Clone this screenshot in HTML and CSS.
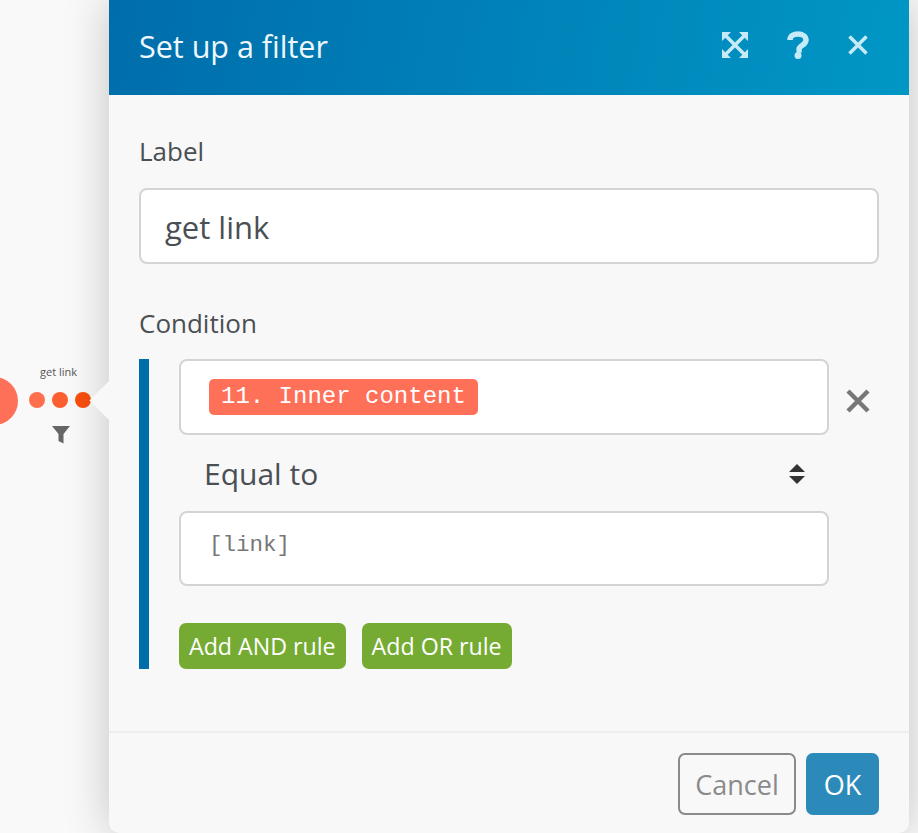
FILE: index.html
```html
<!DOCTYPE html>
<html lang="en">
<head>
    <meta charset="UTF-8">
    <title>Set up a filter</title>
    <link rel="stylesheet" href="styles.css">
</head>
<body>
    <div class="canvas">
        <div class="node"></div>
        <div class="route-label">get link</div>
        <div class="route">
            <span class="dot dot1"></span>
            <span class="dot dot2"></span>
            <span class="dot dot3"></span>
        </div>
        <svg class="route-filter" width="20" height="20" viewBox="0 0 20 20">
            <path d="M1 1h18l-6.500 8v9.500l-5-2.500v-7z" fill="#666"/>
        </svg>
    </div>
    <div class="modal">
        <div class="notch"></div>
        <div class="modal-head">
            <h1>Set up a filter</h1>
            <div class="head-icons">
                <svg width="26" height="26" viewBox="0 0 26 26" fill="none">
                    <path d="M0 9V0h9zM26 9V0h-9zM0 17v9h9zM26 17v9h-9z" fill="#c6ebf7"/>
                    <path d="M4 4l18 18M22 4L4 22" stroke="#c6ebf7" stroke-width="3.500"/>
                </svg>
                <svg width="22" height="28" viewBox="0 0 22 28" fill="none">
                    <path d="M3 9C3 5 6.500 3 11 3s8 2.300 8 6c0 3-2 4.300-4 5.500-2 1.300-3 2.200-3 4.500H9.500" stroke="#c6ebf7" stroke-width="5.500"/>
                    <circle cx="11" cy="24.500" r="3.500" fill="#c6ebf7"/>
                </svg>
                <svg width="20" height="20" viewBox="0 0 20 20" fill="none">
                    <path d="M1.500 1.500l17 17M18.500 1.500l-17 17" stroke="#c6ebf7" stroke-width="3.500"/>
                </svg>
            </div>
        </div>
        <div class="modal-body">
            <label class="field-label">Label</label>
            <div class="text-box">get link</div>
            <label class="field-label condition-label">Condition</label>
            <div class="condition">
                <div class="rule">
                    <div class="rule-row">
                        <div class="box">
                            <span class="tag">11. Inner content</span>
                        </div>
                        <svg class="rule-remove" width="24" height="24" viewBox="0 0 24 24" fill="none">
                            <path d="M2 2l20 20M22 2L2 22" stroke="#777" stroke-width="4.500"/>
                        </svg>
                    </div>
                    <div class="select">
                        <span>Equal to</span>
                        <svg width="16" height="20" viewBox="0 0 16 20">
                            <path d="M8 0l8 8H0zM8 20l8-8H0z" fill="#333"/>
                        </svg>
                    </div>
                    <div class="box box-value">[link]</div>
                </div>
                <div class="rule-btns">
                    <button class="btn-add">Add AND rule</button>
                    <button class="btn-add">Add OR rule</button>
                </div>
            </div>
        </div>
        <div class="modal-foot">
            <button class="btn-cancel">Cancel</button>
            <button class="btn-ok">OK</button>
        </div>
    </div>
</body>
</html>
```

FILE: styles.css
```css
*{margin:0; padding:0; box-sizing:border-box;}
html,body{
    height: 100%;
    overflow: hidden;
}
body{
    position: relative;
    background: #f9f9f9;
    font-family: "Open Sans", "Noto Sans", sans-serif;
    color: #4a4f54;
}

/* scenario behind the dialog */
.canvas{
    position: absolute;
    left: 0;
    top: 0;
    width: 109px;
    height: 833px;
}
.node{
    position: absolute;
    left: -30px;
    top: 377px;
    width: 48px;
    height: 48px;
    border-radius: 50%;
    background: #ff7059;
}
.route-label{
    position: absolute;
    left: 40px;
    top: 364px;
    font-size: 11px;
    line-height: 15px;
    color: #555;
}
.route{
    position: absolute;
    left: 29px;
    top: 392px;
    display: flex;
    gap: 7px;
}
.dot{
    width: 16px;
    height: 16px;
    border-radius: 50%;
}
.dot1{background: #ff6f4c;}
.dot2{background: #fc5f30;}
.dot3{background: #f94f10;}
.route-filter{
    position: absolute;
    left: 51px;
    top: 425px;
}

/* dialog */
.modal{
    position: absolute;
    left: 109px;
    top: 0;
    display: flex;
    flex-direction: column;
    width: 800px;
    height: 833px;
    background: #f8f8f8;
    border-radius: 0 0 10px 10px;
    box-shadow: 0 0 45px rgba(0,0,0,.22);
}
.notch{
    position: absolute;
    left: -14px;
    top: 387px;
    width: 27px;
    height: 27px;
    background: #f8f8f8;
    transform: rotate(45deg);
}
.modal-head{
    position: relative;
    display: flex;
    align-items: center;
    justify-content: space-between;
    height: 95px;
    padding: 0 41px 0 30px;
    background: linear-gradient(100deg, #006dab, #0097c5);
}
.modal-head h1{
    font-size: 30.500px;
    font-weight: normal;
    color: #eef8fc;
    margin-bottom: 4px;
}
.head-icons{
    display: flex;
    align-items: center;
    gap: 39px;
    margin-bottom: 5px;
}
.modal-body{
    position: relative;
    flex: 1;
    padding: 35px 30px 0;
}
.field-label{
    display: block;
    font-size: 26px;
    line-height: 42px;
}
.text-box{
    height: 76px;
    margin-top: 16px;
    padding-left: 24px;
    background: #fff;
    border: 2px solid #d4d4d4;
    border-radius: 8px;
    font-size: 31px;
    line-height: 74px;
}
.condition-label{
    margin-top: 38px;
}
.condition{
    height: 310px;
    margin-top: 15px;
    padding-left: 30px;
    border-left: 10px solid #006dab;
}
.rule{
    width: 650px;
}
.rule-row{
    position: relative;
}
.rule-remove{
    position: absolute;
    left: 667px;
    top: 30px;
}
.box{
    display: flex;
    align-items: center;
    height: 76px;
    padding-left: 28px;
    background: #fff;
    border: 2px solid #d4d4d4;
    border-radius: 8px;
}
.tag{
    height: 36px;
    padding: 0 12px;
    background: #ff7059;
    border-radius: 5px;
    color: #fff;
    font-family: "Liberation Mono", monospace;
    font-size: 24px;
    line-height: 36px;
}
.select{
    display: flex;
    align-items: center;
    justify-content: space-between;
    height: 76px;
    padding: 1px 24px 0 25px;
    font-size: 30px;
}
.box-value{
    height: 75px;
    padding-bottom: 8px;
    color: #777;
    font-family: "Liberation Mono", monospace;
    font-size: 22.500px;
}
.rule-btns{
    display: flex;
    gap: 16px;
    margin-top: 37px;
}
.btn-add{
    height: 46px;
    padding: 0 10px;
    background: #75ab33;
    border: 0;
    border-radius: 7px;
    color: #fff;
    font-family: inherit;
    font-size: 23.200px;
}
.modal-foot{
    display: flex;
    justify-content: flex-end;
    gap: 10px;
    height: 102px;
    padding: 20px 30px 0;
    border-top: 2px solid #eee;
}
.btn-cancel,.btn-ok{
    height: 62px;
    border-radius: 7px;
    font-family: inherit;
    font-size: 27px;
}
.btn-cancel{
    width: 118px;
    background: transparent;
    border: 2px solid #8a8a8a;
    color: #8a8a8a;
}
.btn-ok{
    width: 73px;
    background: #2b8ab9;
    border: 0;
    color: #fff;
}
```
